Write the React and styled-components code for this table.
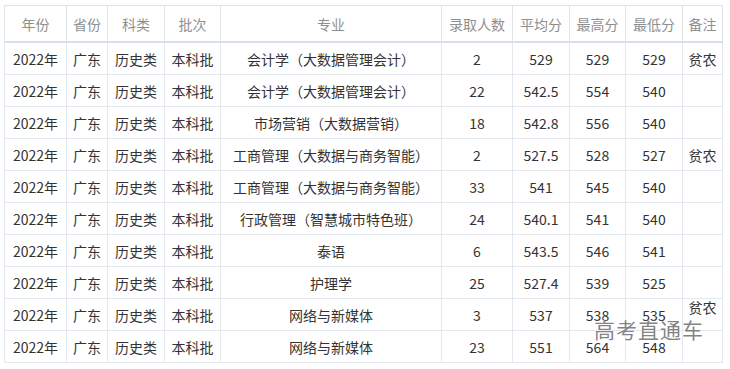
import React from 'react'
import styled, { createGlobalStyle } from 'styled-components'

const GlobalStyle = createGlobalStyle`
  html, body {
    margin: 0;
    padding: 0;
    background: #fff;
  }
  body {
    font-family: "Noto Sans CJK SC", "Microsoft YaHei", sans-serif;
  }
`

const columns = [
  { title: '年份', width: 62 },
  { title: '省份', width: 41 },
  { title: '科类', width: 57 },
  { title: '批次', width: 56 },
  { title: '专业', width: 221 },
  { title: '录取人数', width: 71 },
  { title: '平均分', width: 57 },
  { title: '最高分', width: 56 },
  { title: '最低分', width: 57 },
  { title: '备注', width: 40 },
]

const rows = [
  ['会计学（大数据管理会计）', '2', '529', '529', '529', '贫农'],
  ['会计学（大数据管理会计）', '22', '542.5', '554', '540', ''],
  ['市场营销（大数据营销）', '18', '542.8', '556', '540', ''],
  ['工商管理（大数据与商务智能）', '2', '527.5', '528', '527', '贫农'],
  ['工商管理（大数据与商务智能）', '33', '541', '545', '540', ''],
  ['行政管理（智慧城市特色班）', '24', '540.1', '541', '540', ''],
  ['泰语', '6', '543.5', '546', '541', ''],
  ['护理学', '25', '527.4', '539', '525', ''],
  ['网络与新媒体', '3', '537', '538', '535', '贫农'],
  ['网络与新媒体', '23', '551', '564', '548', ''],
]

function App() {
  return (
    <>
      <GlobalStyle />
      <Page>
        <TableWrap>
          <Table>
            <colgroup>
              {columns.map(c => <col key={c.title} style={{ width: c.width }} />)}
            </colgroup>
            <thead>
              <tr>
                {columns.map(c => <HeadCell key={c.title}>{c.title}</HeadCell>)}
              </tr>
            </thead>
            <tbody>
              {rows.map((r, i) => (
                <tr key={i}>
                  <Cell>2022年</Cell>
                  <Cell>广东</Cell>
                  <Cell>历史类</Cell>
                  <Cell>本科批</Cell>
                  {r.map((v, j) => (
                    <Cell key={j}>
                      <CellText $raised={j === 5 && i === 8}>{v}</CellText>
                    </Cell>
                  ))}
                </tr>
              ))}
            </tbody>
          </Table>
          <Watermark>高考直通车</Watermark>
        </TableWrap>
      </Page>
    </>
  )
}

export default App

const Page = styled.div`
  width: 730px;
  height: 369px;
  padding: 5px 0 0 4px;
  box-sizing: border-box;
  overflow: hidden;
`

const TableWrap = styled.div`
  position: relative;
  width: 718px;
`

const Table = styled.table`
  width: 718px;
  table-layout: fixed;
  border-collapse: collapse;
  font-size: 14px;
  line-height: 18px;
  color: #333;
`

const HeadCell = styled.th`
  height: 35px;
  padding: 0;
  font-weight: 400;
  color: #8f8f8f;
  text-align: center;
  border: 1px solid #dfe3ea;
  border-bottom: 2px solid #d6def0;
  white-space: nowrap;
`

const Cell = styled.td`
  height: 31px;
  padding: 0;
  text-align: center;
  border: 1px solid #e3e7ee;
  white-space: nowrap;
  vertical-align: middle;
`

const CellText = styled.span`
  display: inline-block;
  ${p => p.$raised && 'transform: translateY(-8px);'}
`

const Watermark = styled.div`
  position: absolute;
  left: 590px;
  top: 311px;
  font-size: 21px;
  line-height: 26px;
  letter-spacing: 1px;
  color: rgba(90, 90, 90, 0.75);
  text-shadow: 0 0 2px #fff;
  pointer-events: none;
`
